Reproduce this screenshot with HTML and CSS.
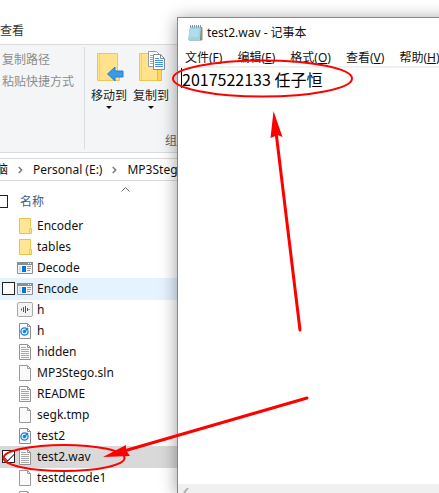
FILE: index.html
```
<!DOCTYPE html>
<html lang="zh-CN">
<head>
<meta charset="utf-8">
<meta name="viewport" content="width=device-width, initial-scale=1">
<title>test2.wav - 记事本</title>
<link rel="stylesheet" href="styles.css">
</head>
<body>
<svg class="symbols" aria-hidden="true">
  <symbol id="folder" viewBox="0 0 16 16"><path d="M2.500.5h11v10h1v5h-12z" fill="#ffe694" stroke="#e8c24a"/><path d="M12.500 15.500v-5l1-1v-9" fill="none" stroke="#edc84f"/></symbol>
  <symbol id="program" viewBox="0 0 16 16"><path d="M.5 2.500h15v11H.5z" fill="#f6f6f6" stroke="#8b8f94"/><path d="M0 2h16v3H0z" fill="#8b8f94"/><path d="M11 3h1v1h-1zM13 3h1v1h-1z" fill="#fff"/><path d="M5 6h4v6H5z" fill="#0078d7"/><path d="M2 6h2v6H2z" fill="#dcdcdc"/><path d="M10 6.500h4M10 8.500h4M10 10.500h3" stroke="#999"/></symbol>
  <symbol id="audio" viewBox="0 0 16 16"><rect x=".5" y=".5" width="15" height="14" rx="1.500" fill="#f3f3f3" stroke="#aaa"/><path d="M4.500 6.500v2M6.500 5v5M8.500 4v7M10.500 6v3M12 7v1" stroke="#555"/></symbol>
  <symbol id="media" viewBox="0 0 16 16"><path d="M2.500.5h8l3 3v12h-11z" fill="#fafafa" stroke="#8d8d8d"/><path d="M10.500.5v3h3" fill="none" stroke="#8d8d8d"/><circle cx="7.500" cy="8.500" r="3.600" fill="#dff0ff" stroke="#1683d8" stroke-width="1.300"/><circle cx="7.500" cy="8.500" r="1.700" fill="#1683d8"/><path d="M8 8l3-3" stroke="#1683d8" stroke-width="1.500"/></symbol>
  <symbol id="text" viewBox="0 0 16 16"><path d="M2.500.5h8l3 3v12h-11z" fill="#fafafa" stroke="#929292"/><path d="M10.500.5v3h3" fill="none" stroke="#929292"/><path d="M4 3.500h5M4 5.500h8M4 7.500h8M4 9.500h8M4 11.500h8M4 13.500h8" stroke="#a8a8a8"/></symbol>
  <symbol id="blank" viewBox="0 0 16 16"><path d="M2.500.5h8l3 3v12h-11z" fill="#fafafa" stroke="#9b9b9b"/><path d="M10.500.5v3h3" fill="none" stroke="#9b9b9b"/></symbol>
  <symbol id="chevron" viewBox="0 0 5 8"><path d="M.7 1L3.700 4 .7 7" fill="none" stroke="#7a7a7a" stroke-width="1.500"/></symbol>
</svg>

<main class="explorer">
  <nav class="tabs"><button class="tab" type="button">查看</button></nav>
  <section class="ribbon">
    <div class="clipboard">
      <button type="button" disabled>复制路径</button>
      <button type="button" disabled>粘贴快捷方式</button>
    </div>
    <div class="organize">
      <div class="commands">
        <button class="command" type="button">
          <svg class="command-icon" viewBox="0 0 32 32"><path d="M4.500 2.500h20v22h2v5h-22z" fill="#ffe28a" stroke="#efc84c"/><path d="M6.500 3v26" stroke="#f5d264"/><path d="M14.500 23l7.500-7v4h8v6h-8v4z" fill="#3b9ae6" stroke="#2583cc"/></svg>
          <span>移动到</span><i class="drop"></i>
        </button>
        <button class="command" type="button">
          <svg class="command-icon" viewBox="0 0 32 32"><path d="M4.500 2.500h18v27h-18z" fill="#ffe28a" stroke="#efc84c"/><path d="M6.500 3v26" stroke="#f5d264"/><path d="M22.500 18.500h4v11h-4z" fill="#ffd760" stroke="#e8bd3f"/><path d="M13.500.5h8l4 4v11h-12z" fill="#fff" stroke="#939ba6"/><path d="M15 4.500h4M15 6.500h4M15 8.500h4M15 10.500h4M15 12.500h4" stroke="#84aee0"/><path d="M18.500 3.500h7l4 4v11h-11z" fill="#fff" stroke="#818b98"/><path d="M25.500 3.500v4h4" fill="none" stroke="#818b98"/><path d="M20 7.500h4M20 9.500h8M20 11.500h8M20 13.500h8M20 15.500h8" stroke="#4d91dc"/></svg>
          <span>复制到</span><i class="drop"></i>
        </button>
      </div>
      <div class="group-name">组织</div>
    </div>
  </section>
  <nav class="address">
    <a href="#">脑</a><svg class="sep"><use href="#chevron"/></svg>
    <a href="#">Personal (E:)</a><svg class="sep"><use href="#chevron"/></svg>
    <a href="#">MP3Stego</a>
  </nav>
  <div class="columns">
    <input class="check check-all" type="checkbox" aria-label="全选">
    <button class="column" type="button">名称</button>
    <svg class="sort" viewBox="0 0 9 5"><path d="M.5 4.500l4-4 4 4" fill="none" stroke="#666"/></svg>
  </div>
  <ul class="files">
    <li><label class="file"><input class="check" type="checkbox"><svg class="icon"><use href="#folder"/></svg>Encoder</label></li>
    <li><label class="file"><input class="check" type="checkbox"><svg class="icon"><use href="#folder"/></svg>tables</label></li>
    <li><label class="file"><input class="check" type="checkbox"><svg class="icon"><use href="#program"/></svg>Decode</label></li>
    <li><label class="file hovered"><input class="check" type="checkbox"><svg class="icon"><use href="#program"/></svg>Encode</label></li>
    <li><label class="file"><input class="check" type="checkbox"><svg class="icon"><use href="#audio"/></svg>h</label></li>
    <li><label class="file"><input class="check" type="checkbox"><svg class="icon"><use href="#media"/></svg>h</label></li>
    <li><label class="file"><input class="check" type="checkbox"><svg class="icon"><use href="#text"/></svg>hidden</label></li>
    <li><label class="file"><input class="check" type="checkbox"><svg class="icon"><use href="#blank"/></svg>MP3Stego.sln</label></li>
    <li><label class="file"><input class="check" type="checkbox"><svg class="icon"><use href="#text"/></svg>README</label></li>
    <li><label class="file"><input class="check" type="checkbox"><svg class="icon"><use href="#blank"/></svg>segk.tmp</label></li>
    <li><label class="file"><input class="check" type="checkbox"><svg class="icon"><use href="#media"/></svg>test2</label></li>
    <li><label class="file selected"><input class="check" type="checkbox" checked><svg class="icon"><use href="#text"/></svg>test2.wav</label></li>
    <li><label class="file"><input class="check" type="checkbox"><svg class="icon"><use href="#blank"/></svg>testdecode1</label></li>
    <li><label class="file"><input class="check" type="checkbox"><svg class="icon"><use href="#blank"/></svg></label></li>
  </ul>
</main>

<section class="notepad">
  <header class="title">
    <svg class="title-icon" viewBox="0 0 16 16"><path d="M3 2h12l-1 13.500H2z" fill="#6f8790"/><path d="M14 2.500h1.500V15l-1.500.8z" fill="#b08a57"/><path d="M3 1.500h11L13 15H1z" fill="#9fd3e4"/><path d="M3 5h9M3 7h9M2.500 9h9M2.500 11h9" stroke="#c4e8f2"/><path d="M3.500 0v2.500M5.500 0v2.500M7.500 0v2.500M9.500 0v2.500M11.500 0v2.500M13.500 0v2.500" stroke="#6c7c84" stroke-width=".8"/></svg>
    <span>test2.wav - 记事本</span>
  </header>
  <nav class="menu">
    <button type="button">文件(<u>F</u>)</button>
    <button type="button">编辑(<u>E</u>)</button>
    <button type="button">格式(<u>O</u>)</button>
    <button type="button">查看(<u>V</u>)</button>
    <button type="button">帮助(<u>H</u>)</button>
  </nav>
  <div class="editor"><i class="cursor"></i><textarea aria-label="文本内容" spellcheck="false">2017522133 任子恒</textarea></div>
  <div class="scrollbar"><button type="button" aria-label="向左滚动"><svg class="scroll-arrow" viewBox="0 0 6 8"><path d="M5 0L1.500 4 5 8" fill="none" stroke="#b5b5b5" stroke-width="2"/></svg></button></div>
</section>

<svg class="marks" aria-hidden="true">
  <g fill="none" stroke="#f00">
    <ellipse cx="262.500" cy="78.500" rx="89.500" ry="18" stroke-width="2"/>
    <ellipse cx="64" cy="458" rx="60.500" ry="13" stroke-width="2"/>
    <path d="M300 330L276 132M307 398L124 451" stroke-width="3" stroke-linecap="round"/>
  </g>
  <path d="M273.500 111l9 26-5-2-7 3zM103 457l23-12 0 5 4 6z" fill="#f00"/>
</svg>
</body>
</html>
```
FILE: styles.css
```
* { box-sizing: border-box; }

body {
  margin: 0;
  height: 100vh;
  overflow: hidden;
  position: relative;
  background: #fff;
  color: #111;
  font: 12px/20px "Noto Sans", "Noto Sans CJK SC", sans-serif;
}

button {
  padding: 0;
  border: 0;
  background: none;
  color: inherit;
  font: inherit;
  white-space: nowrap;
}

.symbols { position: absolute; width: 0; height: 0; }

/* Explorer */
.tabs {
  display: flex;
  height: 45px;
  padding-top: 21px;
  border-bottom: 1px solid #dadbdc;
}
.tab { height: 20px; color: #333; }

.ribbon {
  display: flex;
  height: 108px;
  padding: 2px 0 3px;
  background: #f4f5f7;
  border-bottom: 1px solid #dadbdc;
}
.clipboard {
  display: flex;
  flex-direction: column;
  align-items: flex-start;
  gap: 2px;
  width: 85px;
  padding: 3px 2px;
  border-right: 1px solid #dcdde0;
}
.clipboard button { color: #8d8d8d; }
.organize { flex: 1; display: flex; flex-direction: column; justify-content: space-between; }
.commands { display: flex; gap: 2px; padding: 4px; }
.command {
  display: flex;
  flex-direction: column;
  align-items: center;
  width: 40px;
  color: #222;
}
.command-icon { width: 32px; height: 32px; margin-bottom: 3px; }
.drop {
  border: 3px solid transparent;
  border-top-color: #111;
  border-bottom: 0;
}
.group-name { padding-left: 80px; line-height: 16px; color: #666; }

.address {
  display: flex;
  align-items: center;
  gap: 10px;
  height: 23px;
  margin-top: 5px;
  border: solid #d9d9d9;
  border-width: 1px 0;
}
.address a { color: #111; text-decoration: none; white-space: nowrap; }
.address a:first-child { margin-left: -4px; }
.sep { flex: none; width: 5px; height: 8px; }

.columns { display: flex; align-items: center; height: 34px; padding-top: 7px; }
.column { margin-left: 12px; color: #44597c; }
.sort { width: 9px; height: 5px; margin: 0 0 24px 77px; }

.check {
  appearance: none;
  flex: none;
  width: 13px;
  height: 13px;
  margin: 0;
  border: 1px solid #222;
  background: #fff;
}
.check-all { margin-left: -5px; }

.files { margin: 0; padding: 0; list-style: none; }
.file {
  display: flex;
  align-items: center;
  gap: 2px;
  height: 21px;
  padding-left: 2px;
}
.file .check { opacity: 0; }
.file .icon { flex: none; width: 16px; height: 16px; margin-right: 2px; }
.hovered { background: #e5f3ff; box-shadow: 0 1px #e5f3ff; }
.selected { background: #d9d9d9; box-shadow: 0 1px #d9d9d9; }
.hovered .check, .selected .check { opacity: 1; }
.selected .check {
  display: grid;
  place-items: center;
}
.selected .check::before {
  content: "";
  width: 9px;
  height: 5px;
  border: solid #222;
  border-width: 0 0 1px 1px;
  transform: translateY(-1px) rotate(-45deg);
}

/* Notepad window floating over the explorer */
.notepad {
  position: absolute;
  inset: 17px -20px 0 177px;
  display: flex;
  flex-direction: column;
  background: #fff;
  border: solid #22b1b8;
  border-width: 1px 0 0 1px;
  box-shadow: 0 2px 16px rgba(0, 0, 0, .4);
}
.title {
  display: flex;
  align-items: center;
  gap: 4px;
  height: 30px;
  padding-left: 9px;
}
.title-icon { width: 16px; height: 16px; }
.menu {
  display: flex;
  gap: 15px;
  height: 20px;
  padding-left: 7px;
  border-bottom: 2px solid #f0f0f0;
}
.editor { flex: 1; display: flex; padding-left: 3px; }
.cursor { width: 1px; height: 20px; background: #000; }
.editor textarea {
  flex: 1;
  min-width: 0;
  padding: 0;
  border: 0;
  outline: 0;
  resize: none;
  background: none;
  color: #000;
  font: 16px/22px "Noto Sans CJK SC", sans-serif;
}
.scrollbar { height: 9px; padding: 4px 5px 0; background: #f0f0f0; overflow: hidden; }
.scrollbar button { display: block; }
.scroll-arrow { display: block; width: 6px; height: 8px; }

/* Red pen marks drawn over both windows */
.marks { position: absolute; inset: 0; width: 100%; height: 100%; pointer-events: none; }
```
